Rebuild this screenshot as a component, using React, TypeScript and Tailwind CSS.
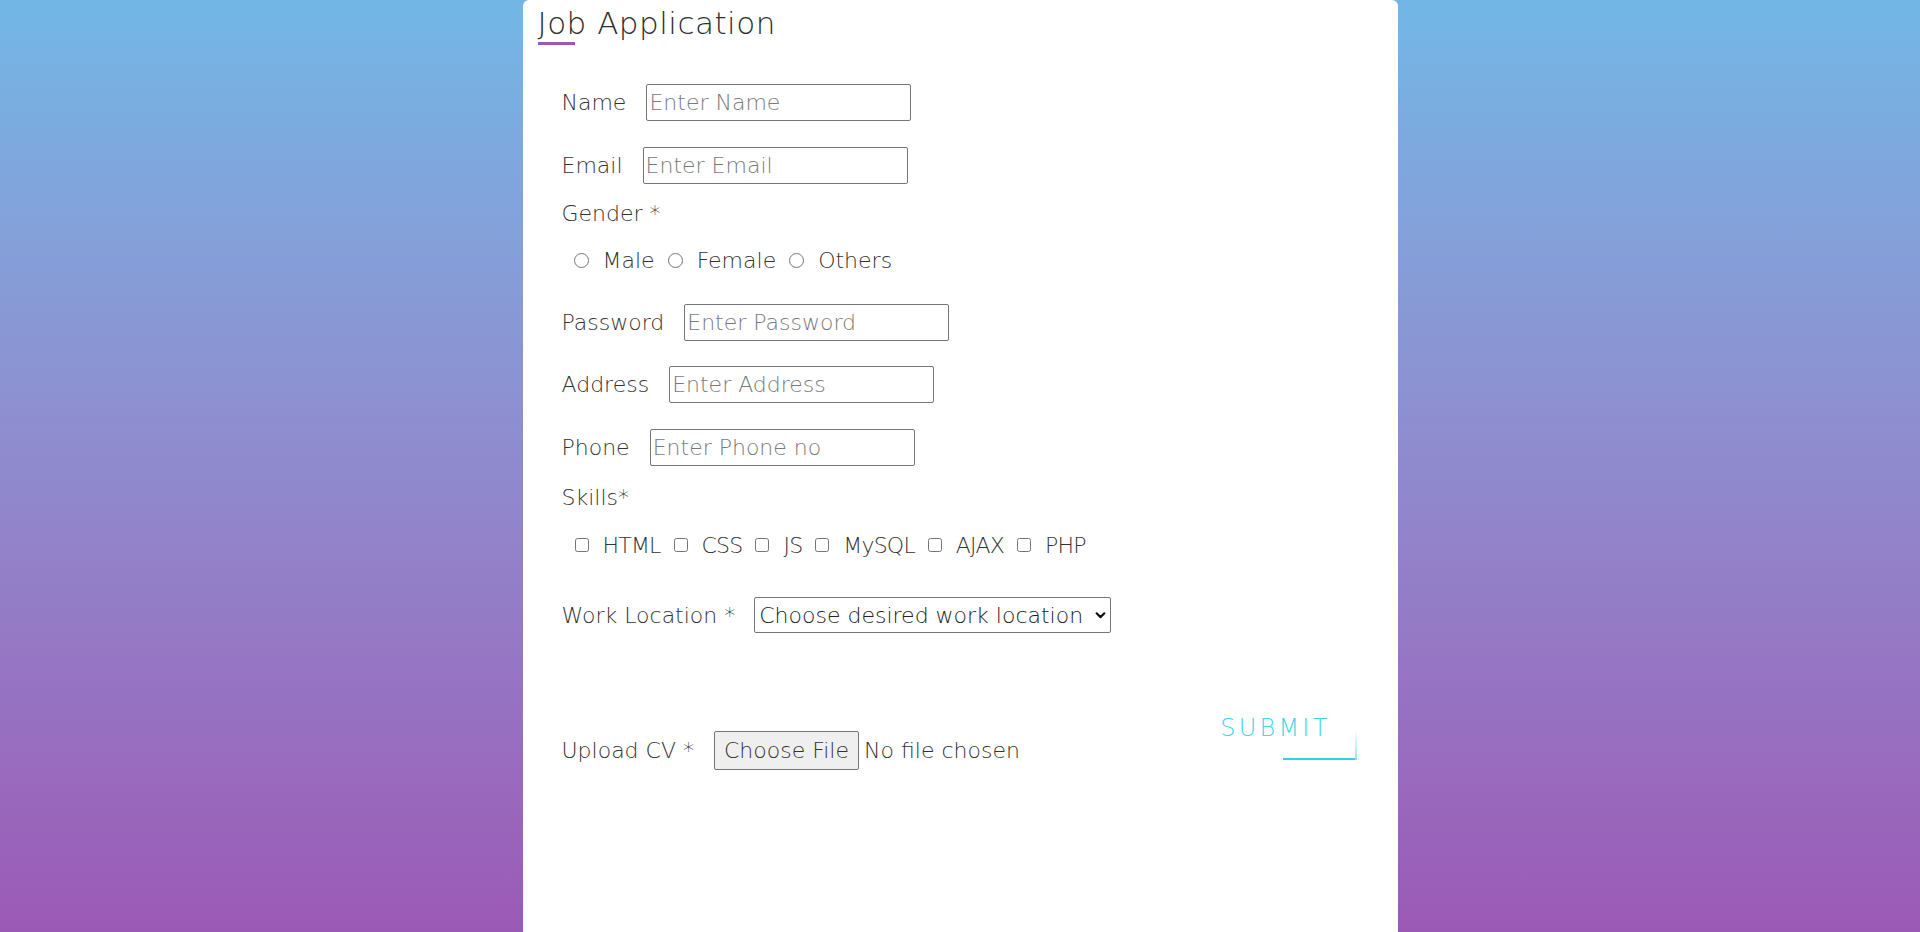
import React from "react";

function Field({
  label,
  placeholder,
  type,
  className,
}: {
  label: string;
  placeholder: string;
  type: string;
  className: string;
}) {
  return (
    <div className={`flex items-center h-[37px] ${className}`}>
      <label className="mr-[20px] whitespace-nowrap">{label}</label>
      <input
        type={type}
        placeholder={placeholder}
        className="h-[37px] w-[265px] border border-[#767676] rounded-[2px] pl-[2px] bg-white text-[#333] outline-none placeholder:text-[#7a7a7a]"
      />
    </div>
  );
}

export default function App() {
  const genders = ["Male", "Female", "Others"];
  const skills = ["HTML", "CSS", "JS", "MySQL", "AJAX", "PHP"];
  return (
    <div className="h-[932px] w-full overflow-hidden bg-linear-to-b from-[#71b7e6] to-[#9b59b6] flex justify-center font-['DejaVu_Sans',sans-serif] font-extralight text-[#333]">
      <div className="w-[875px] h-full bg-white rounded-t-[6px] px-[15px]">
        <div>
          <h1 className="pt-[4px] text-[31px] leading-[38px] tracking-[0.5px] font-extralight text-[#2e2e2e]">
            Job Application
          </h1>
          <div className="h-[3px] w-[37px] bg-[#9b59b6]" />
        </div>
        <form className="pl-[24px] pr-[26px] flex flex-col text-[22px]">
          <Field className="mt-[39px]" label="Name" placeholder="Enter Name" type="text" />
          <Field className="mt-[26px]" label="Email" placeholder="Enter Email" type="email" />

          <div className="mt-[14px] h-[30px] flex items-center">Gender *</div>
          <div className="mt-[17px] h-[30px] flex items-center pl-[12px]">
            {genders.map((g) => (
              <label key={g} className="flex items-center">
                <input type="radio" name="gender" className="m-0 w-[15px] h-[15px]" />
                <span className="ml-[14px] mr-[13px]">{g}</span>
              </label>
            ))}
          </div>

          <Field className="mt-[29px]" label="Password" placeholder="Enter Password" type="password" />
          <Field className="mt-[25px]" label="Address" placeholder="Enter Address" type="text" />
          <Field className="mt-[26px]" label="Phone" placeholder="Enter Phone no" type="tel" />

          <div className="mt-[16px] h-[30px] flex items-center">Skills*</div>
          <div className="mt-[18px] h-[30px] flex items-center pl-[13px]">
            {skills.map((s) => (
              <label key={s} className="flex items-center">
                <input type="checkbox" className="m-0 w-[14px] h-[14px]" />
                <span className="ml-[14px] mr-[13px] tracking-[-0.8px]">{s}</span>
              </label>
            ))}
          </div>

          <div className="mt-[37px] h-[36px] flex items-center">
            <label className="mr-[19px] whitespace-nowrap">Work Location *</label>
            <div className="relative">
              <select
                defaultValue=""
                className="h-[36px] w-[357px] appearance-none border border-[#767676] rounded-[2px] pl-[4px] pr-[20px] bg-white text-[#222] outline-none"
              >
                <option value="" disabled>
                  Choose desired work location
                </option>
                <option value="remote">Remote</option>
                <option value="office">Office</option>
              </select>
              <svg
                className="absolute right-[5px] top-[13px] w-[11px] h-[11px] pointer-events-none"
                viewBox="0 0 10 10"
                fill="none"
              >
                <path d="M1.5 3 L5 6.5 L8.5 3" stroke="#111" strokeWidth="2" strokeLinecap="round" strokeLinejoin="round" />
              </svg>
            </div>
          </div>

          <div className="flex justify-between items-start">
            <div className="mt-[98px] h-[39px] flex items-center">
              <span className="mr-[20px] whitespace-nowrap">Upload CV *</span>
              <label className="flex items-center">
                <input type="file" className="hidden" />
                <span className="h-[39px] px-[9px] flex items-center border border-[#767676] bg-[#efefef] rounded-[2px] text-[#333]">
                  Choose File
                </span>
                <span className="ml-[5px] text-[#333] whitespace-nowrap">No file chosen</span>
              </label>
            </div>
            <button
              type="submit"
              className="relative mt-[80px] pl-[10px] pr-[26px] pb-[17px] text-[24px] leading-[30px] tracking-[3.2px] font-extralight text-[#3fd6e6]"
            >
              SUBMIT
              <span className="absolute right-0 bottom-0 h-[2px] w-[74px] bg-[#2fd3e3]" />
              <span className="absolute right-0 bottom-0 w-[2px] h-[30px] bg-linear-to-t from-[#8fe6ef] to-transparent" />
            </button>
          </div>
        </form>
      </div>
    </div>
  );
}
